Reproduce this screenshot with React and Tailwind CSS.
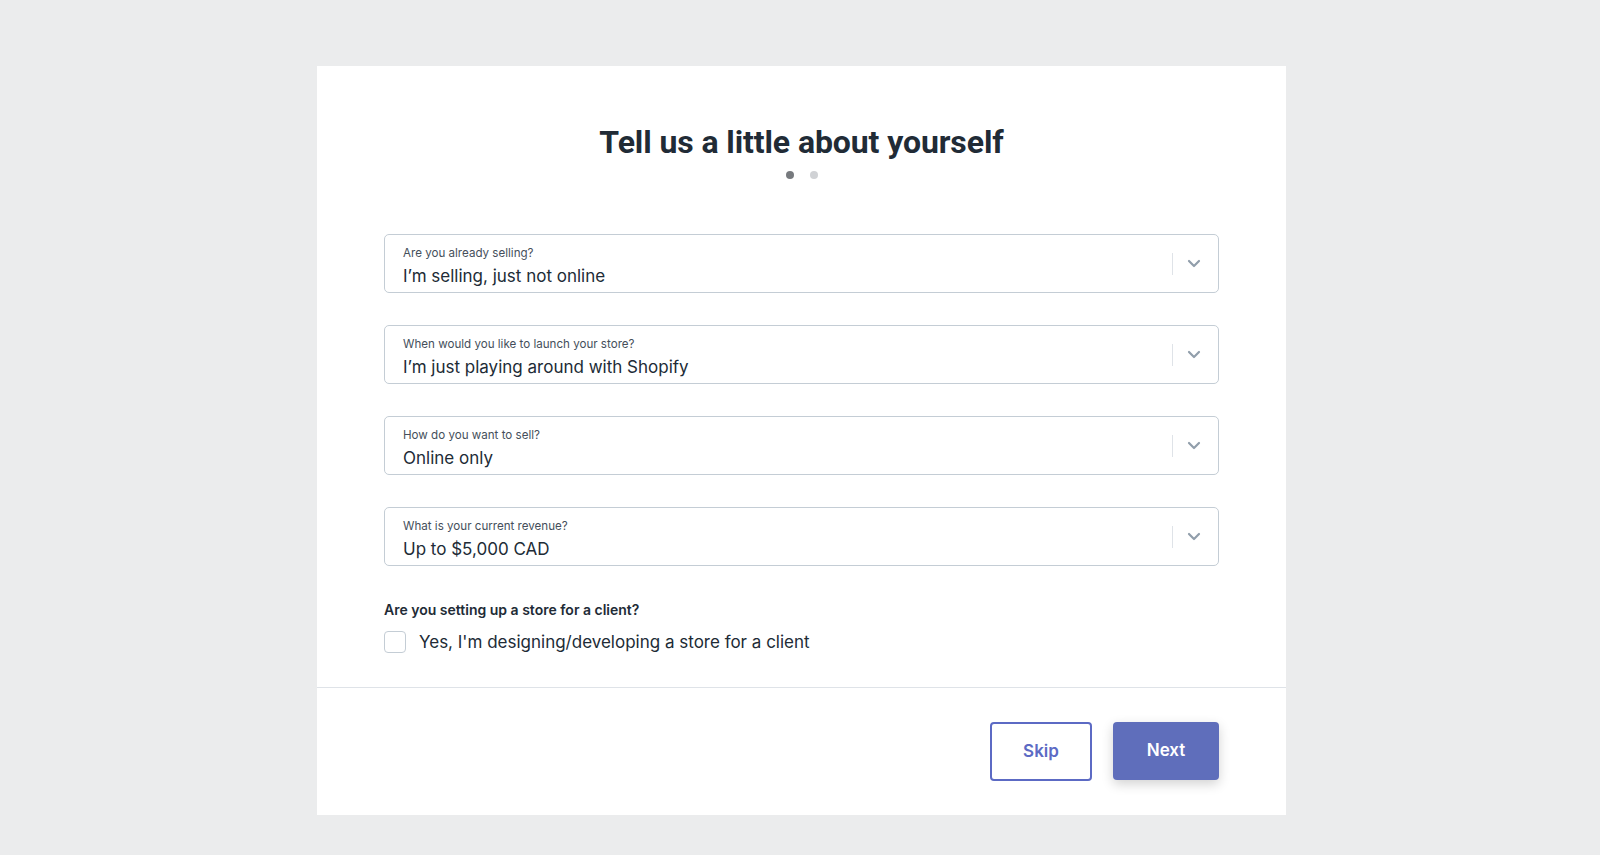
import React, { useState } from "react";

const fields = [
  { label: "Are you already selling?", value: "I\u2019m selling, just not online" },
  { label: "When would you like to launch your store?", value: "I\u2019m just playing around with Shopify" },
  { label: "How do you want to sell?", value: "Online only" },
  { label: "What is your current revenue?", value: "Up to $5,000 CAD" },
];

const SelectField = ({ label, value }) => (
  <div className="flex h-[59px] w-full items-center rounded-[5px] border border-[#c4cdd5] bg-white pl-[18px] pr-[17px]">
    <div className="flex flex-1 flex-col pt-[4px]">
      <span className="text-[11.6px] leading-[16px] text-[#454f5b]">{label}</span>
      <span className="mt-[4px] text-[17px] leading-[22px] text-[#212b36]">{value}</span>
    </div>
    <div className="h-[22px] w-px bg-[#dfe3e8]" />
    <svg className="ml-[14px]" width="14" height="9" viewBox="0 0 14 9" fill="none">
      <path d="M2 2l5 5 5-5" stroke="#919eab" strokeWidth="2.2" strokeLinecap="round" strokeLinejoin="round" />
    </svg>
  </div>
);

export default function App() {
  const [forClient, setForClient] = useState(false);

  return (
    <div className="min-h-screen bg-[#ebeced] pt-[66px] pb-[41px] font-['Inter',sans-serif]">
      <div className="ml-[317px] w-[969px] bg-white">
        <div className="flex flex-col items-center px-[67px] pt-[54px]">
          <h1 className="font-['Roboto',sans-serif] text-[32px] font-bold leading-[44px] tracking-[-0.1px] text-[#212b36]">
            Tell us a little about yourself
          </h1>
          <div className="mt-[7px] flex gap-[16px]">
            <span className="h-[8px] w-[8px] rounded-full bg-[#777a7e]" />
            <span className="h-[8px] w-[8px] rounded-full bg-[#d0d2d5]" />
          </div>

          <div className="mt-[55px] flex w-full flex-col gap-[32px]">
            {fields.map((f) => (
              <SelectField key={f.label} label={f.label} value={f.value} />
            ))}
          </div>

          <div className="mt-[34px] w-full">
            <p className="text-[14px] font-semibold leading-[20px] text-[#212b36]">
              Are you setting up a store for a client?
            </p>
            <label className="mt-[10px] flex cursor-pointer items-center gap-[13px]">
              <span
                onClick={() => setForClient(!forClient)}
                className={`h-[22px] w-[22px] rounded-[4px] border border-[#c4cdd5] ${forClient ? "bg-[#5c6ac4]" : "bg-white"}`}
              />
              <span className="text-[17px] leading-[24px] text-[#212b36]">
                Yes, I'm designing/developing a store for a client
              </span>
            </label>
          </div>
        </div>

        <div className="mt-[33px] flex justify-end gap-[21px] border-t border-[#dfe3e8] px-[67px] pt-[34px] pb-[34px]">
          <button className="h-[59px] w-[102px] rounded-[4px] border-2 border-[#5c6ac4] bg-white text-[17px] font-semibold text-[#5c6ac4]">
            Skip
          </button>
          <button className="h-[58px] w-[106px] rounded-[4px] bg-[#5f6ebb] text-[17px] font-semibold text-white shadow-[0_4px_12px_rgba(0,0,0,0.18)]">
            Next
          </button>
        </div>
      </div>
    </div>
  );
}
